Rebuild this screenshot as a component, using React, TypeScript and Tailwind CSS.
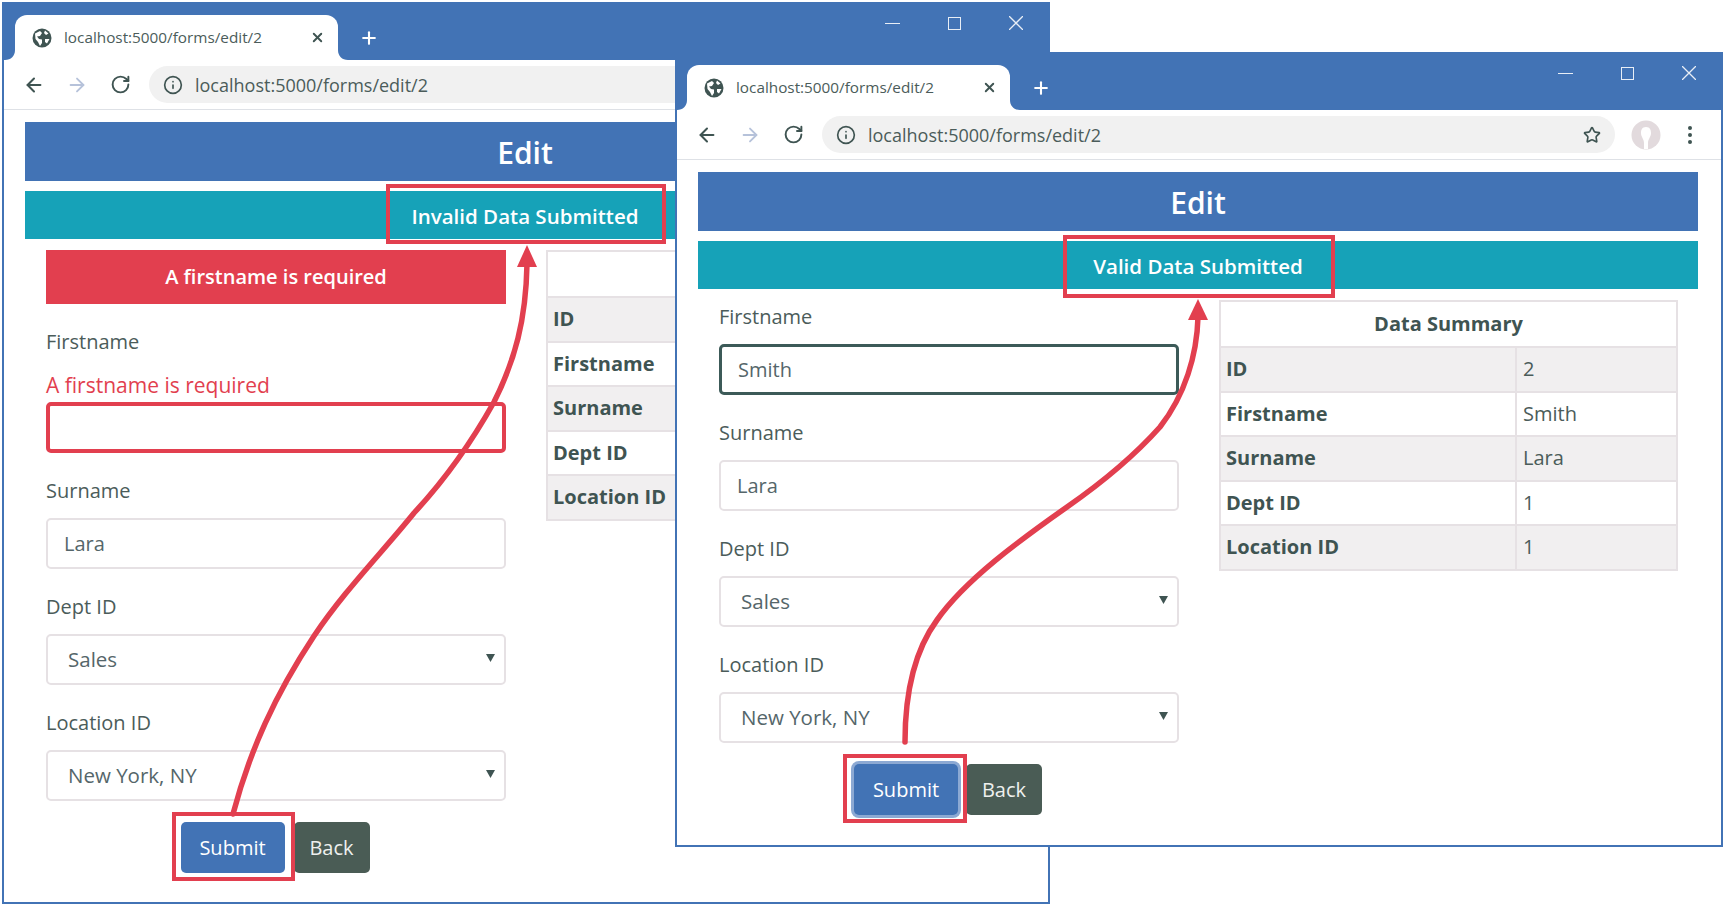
import React from "react";
import { ArrowLeft, ArrowRight, Info, Plus, RotateCw, Star, X } from "lucide-react";

const Globe = () => (
  <svg width="20" height="20" viewBox="0 0 20 20" className="shrink-0">
    <circle cx="10" cy="10" r="9.5" fill="#3f5452" />
    <path d="M3 5.5 L8 3 L10 5 L8 8 L5 8.5 L7 11 L10 11.5 L10 15 L8 18 L6 14 L3.5 11 Z M13 2.5 L16.5 5.5 L14 7 L12 5 Z M13 11 L17.5 11 L15 15.5 L13 14 Z" fill="#ffffff" />
  </svg>
);

const TabEar = ({ flip }: { flip?: boolean }) => (
  <svg width="10" height="10" viewBox="0 0 10 10" className={flip ? "absolute bottom-0 right-[-10px]" : "absolute bottom-0 left-[-10px]"}>
    {flip ? <path d="M0 0 C0 6 4 10 10 10 L0 10 Z" fill="#ffffff" /> : <path d="M10 0 C10 6 6 10 0 10 L10 10 Z" fill="#ffffff" />}
  </svg>
);

const Avatar = () => (
  <svg width="30" height="30" viewBox="0 0 30 30">
    <circle cx="15" cy="15" r="14.5" fill="#e2dadd" />
    <path d="M15 7 C19 7 20 10 20 13 C20 17 17 19 17 23 L17 29 L13 29 L13 23 C13 19 10 17 10 13 C10 10 11 7 15 7 Z" fill="#ffffff" />
  </svg>
);

function BrowserWindow({ frame, tabMargin, children }: { frame: string; tabMargin: string; children: React.ReactNode }) {
  return (
    <div className={`${frame} flex flex-col border-2 border-[#4273b5] bg-white`}>
      <div className="flex h-[56px] shrink-0 items-end bg-[#4273b5]">
        <div className={`${tabMargin} relative flex h-[45px] w-[323px] shrink-0 items-center rounded-t-[12px] bg-white pl-[17px] pr-[13px]`}>
          <TabEar />
          <TabEar flip />
          <Globe />
          <span className="ml-[12px] flex-1 whitespace-nowrap text-[15.3px] leading-none text-[#4b5c5a]">localhost:5000/forms/edit/2</span>
          <X size={15} strokeWidth={3} className="text-[#3f5452]" />
        </div>
        <div className="ml-[21px] flex h-[45px] items-center">
          <Plus size={20} strokeWidth={2.5} className="text-white" />
        </div>
        <div className="ml-auto mr-[25px] flex items-center gap-[48px] self-start pt-[12px] text-[#e8eef6]">
          <div className="h-[1px] w-[15px] bg-[#e8eef6]" />
          <div className="h-[13px] w-[13px] border border-[#e8eef6]" />
          <svg width="14" height="14" viewBox="0 0 14 14"><path d="M0 0 L14 14 M14 0 L0 14" stroke="#e8eef6" strokeWidth="1.3" /></svg>
        </div>
      </div>
      <div className="flex h-[50px] shrink-0 items-center border-b border-[#dee1e6] bg-white pl-[19px] pr-[20px]">
        <ArrowLeft size={22} strokeWidth={2.2} className="shrink-0 text-[#3f5452]" />
        <ArrowRight size={22} strokeWidth={2} className="ml-[21px] shrink-0 text-[#b6c2da]" />
        <RotateCw size={21} strokeWidth={2.2} className="ml-[22px] shrink-0 text-[#3f5452]" />
        <div className="ml-[18px] flex h-[37px] w-[793px] shrink-0 items-center rounded-full bg-[#f1f1f1] pl-[14px] pr-[14px]">
          <Info size={20} strokeWidth={2} className="shrink-0 text-[#3f5452]" />
          <span className="ml-[12px] flex-1 pt-[1px] text-[18px] leading-none text-[#4b5c5a]">localhost:5000/forms/edit/2</span>
          <Star size={18} strokeWidth={2.2} className="shrink-0 text-[#3f5452]" />
        </div>
        <div className="ml-[16px] shrink-0"><Avatar /></div>
        <div className="ml-[27px] flex shrink-0 flex-col gap-[3px]">
          <span className="h-[4px] w-[4px] rounded-full bg-[#3f5452]" />
          <span className="h-[4px] w-[4px] rounded-full bg-[#3f5452]" />
          <span className="h-[4px] w-[4px] rounded-full bg-[#3f5452]" />
        </div>
      </div>
      <div className="px-[21px] pt-[12px]">{children}</div>
    </div>
  );
}

const Heading = ({ status }: { status: string }) => (
  <>
    <div className="flex h-[59px] w-[1000px] items-center justify-center bg-[#4273b5] pt-[1px] text-[30px] font-semibold text-white">Edit</div>
    <div className="mt-[10px] flex h-[48px] w-[1000px] items-center justify-center bg-[#16a2b8] pt-[2px] text-[20.5px] font-semibold text-white">{status}</div>
  </>
);

const Label = ({ children, className }: { children: string; className: string }) => (
  <div className={`${className} flex h-[30px] items-center text-[20px] text-[#4b5c5a]`}>{children}</div>
);

const TextBox = ({ value, className }: { value: string; className: string }) => (
  <input readOnly value={value} className={`${className} block h-[51px] w-[460px] rounded-[5px] bg-white pl-[16px] text-[20px] text-[#55666a] outline-none`} />
);

const SelectBox = ({ value, className }: { value: string; className: string }) => (
  <div className={`${className} flex h-[51px] w-[460px] items-center justify-between rounded-[5px] border-2 border-[#e6e1e4] bg-white pl-[20px] pr-[9px] text-[20.5px] text-[#55666a]`}>
    <span>{value}</span>
    <svg width="9" height="8" viewBox="0 0 9 8" className="-mt-[4px]"><path d="M0 0 L9 0 L4.5 8 Z" fill="#3f5452" /></svg>
  </div>
);

const Buttons = ({ focused, className }: { focused: boolean; className: string }) => (
  <div className={`${className} flex w-[458px] items-start justify-center ${focused ? "gap-[8px]" : "gap-[9px]"}`}>
    <button className={`flex h-[51px] w-[104px] items-center justify-center rounded-[5px] bg-[#4273b5] text-[20px] text-white ${focused ? "ring-[3px] ring-[#8ca9d3]" : ""}`}>Submit</button>
    <button className="flex h-[51px] w-[76px] items-center justify-center rounded-[5px] bg-[#4a5c55] text-[20px] text-[#eef0ee]">Back</button>
  </div>
);

const rows: [string, string][] = [["ID", "2"], ["Firstname", "Smith"], ["Surname", "Lara"], ["Dept ID", "1"], ["Location ID", "1"]];

const Summary = () => (
  <table className="w-[457px] shrink-0 table-fixed self-start border-collapse text-[20px] text-[#4b5c5a]">
    <colgroup>
      <col className="w-[296px]" />
      <col className="w-[161px]" />
    </colgroup>
    <thead>
      <tr className="h-[46px]">
        <th colSpan={2} className="border-2 border-[#e6e1e4] text-center font-bold text-[#3f5452]">Data Summary</th>
      </tr>
    </thead>
    <tbody>
      {rows.map(([k, v], i) => (
        <tr key={k} className={i % 2 === 0 ? "h-[44.5px] bg-[#f1eff0]" : "h-[44.5px] bg-white"}>
          <th className="border-2 border-[#e6e1e4] pl-[5px] text-left font-bold text-[#3f5452]">{k}</th>
          <td className="border-2 border-[#e6e1e4] pl-[6px]">{v}</td>
        </tr>
      ))}
    </tbody>
  </table>
);

export default function App() {
  return (
    <div className="relative h-[907px] w-[1725px] overflow-hidden bg-white font-[family-name:'Open_Sans',sans-serif]">
      <BrowserWindow frame="absolute left-[2px] top-[2px] z-0 h-[902px] w-[1048px]" tabMargin="ml-[11px]">
        <Heading status="Invalid Data Submitted" />
        <div className="mt-[11px] flex items-start gap-[40px] pl-[21px]">
          <div className="w-[460px] shrink-0">
            <div className="flex h-[54px] items-center justify-center bg-[#e23f4f] text-[20px] font-semibold text-white">A firstname is required</div>
            <Label className="mt-[23px]">Firstname</Label>
            <div className="mt-[13px] flex h-[30px] items-center pt-[1px] text-[21px] text-[#e23f4f]">A firstname is required</div>
            <TextBox value="" className="mt-[2px] border-4 border-[#e23f4f]" />
            <Label className="mt-[23px]">Surname</Label>
            <TextBox value="Lara" className="mt-[12px] border-2 border-[#e6e1e4]" />
            <Label className="mt-[23px]">Dept ID</Label>
            <SelectBox value="Sales" className="mt-[12px]" />
            <Label className="mt-[23px]">Location ID</Label>
            <SelectBox value="New York, NY" className="mt-[12px]" />
            <Buttons focused={false} className="mt-[21px]" />
          </div>
          <Summary />
        </div>
      </BrowserWindow>

      <BrowserWindow frame="absolute left-[675px] top-[52px] z-10 h-[795px] w-[1048px]" tabMargin="ml-[10px]">
        <Heading status="Valid Data Submitted" />
        <div className="mt-[11px] flex items-start gap-[40px] pl-[21px]">
          <div className="w-[460px] shrink-0 pt-[2px]">
            <Label className="mt-0">Firstname</Label>
            <TextBox value="Smith" className="mt-[12px] border-[3px] border-[#3c5a58]" />
            <Label className="mt-[23px]">Surname</Label>
            <TextBox value="Lara" className="mt-[12px] border-2 border-[#e6e1e4]" />
            <Label className="mt-[23px]">Dept ID</Label>
            <SelectBox value="Sales" className="mt-[12px]" />
            <Label className="mt-[23px]">Location ID</Label>
            <SelectBox value="New York, NY" className="mt-[12px]" />
            <Buttons focused className="mt-[21px]" />
          </div>
          <Summary />
        </div>
      </BrowserWindow>

      <svg className="pointer-events-none absolute inset-0 z-20" width="1725" height="907" viewBox="0 0 1725 907" fill="none">
        <g stroke="#e23f4f" strokeWidth="4">
          <rect x="388" y="186" width="276" height="56" />
          <rect x="174" y="814" width="119" height="65" />
          <rect x="1065" y="237" width="268" height="59" />
          <rect x="845" y="756" width="120" height="65" />
        </g>
        <g stroke="#e23f4f" strokeWidth="5.5" strokeLinecap="round">
          <path d="M233 814 C250 750 275 695 314 636 C345 590 380 555 414 513 C440 485 470 445 494 402 C515 360 526 320 527 264" />
          <path d="M905 742 C905 690 915 650 937 620 C965 580 1020 540 1067 507 C1100 484 1135 455 1160 427 C1185 395 1197 355 1198 317" />
        </g>
        <polygon points="527,245 517,267 537,267" fill="#e23f4f" />
        <polygon points="1198,299 1188,320 1208,320" fill="#e23f4f" />
      </svg>
    </div>
  );
}
